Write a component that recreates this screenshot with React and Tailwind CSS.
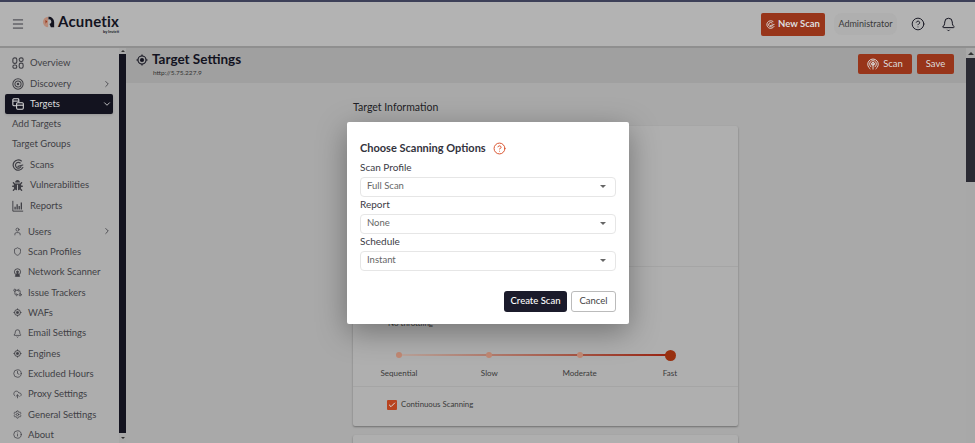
import { User, Shield, GitCompareArrows, Bell, Clock, CloudUpload, Settings, Info, ChevronRight, ChevronDown, Menu, CircleHelp, Check } from "lucide-react";
import { FaBug } from "react-icons/fa";

const font = { fontFamily: 'Lato, "Noto Sans", sans-serif' };

function OverviewIcon({ className }) {
  return (
    <svg viewBox="0 0 14 14" className={className} fill="none" stroke="currentColor" strokeWidth="1.3">
      <rect x="1" y="1" width="4.6" height="6.4" rx="2" />
      <rect x="8.4" y="1" width="4.6" height="4.2" rx="2" />
      <rect x="1" y="9.4" width="4.6" height="3.8" rx="1.9" />
      <rect x="8.4" y="7.2" width="4.6" height="6" rx="2" />
    </svg>
  );
}

function DiscoveryIcon({ className }) {
  return (
    <svg viewBox="0 0 14 14" className={className} fill="none" stroke="currentColor">
      <circle cx="7" cy="7" r="6" strokeWidth="1.2" />
      <circle cx="7" cy="7" r="3.6" strokeWidth="1.2" />
      <circle cx="7" cy="7" r="1.5" fill="currentColor" stroke="none" />
    </svg>
  );
}

function TargetsIcon({ className }) {
  return (
    <svg viewBox="0 0 14 14" className={className} fill="none" stroke="currentColor" strokeWidth="1.2">
      <path d="M5 9H2a1 1 0 0 1-1-1V2a1 1 0 0 1 1-1h5a1 1 0 0 1 1 1v3" />
      <path d="M1 3.6h7" />
      <rect x="5.4" y="5.6" width="7.8" height="7.4" rx="1.2" />
      <path d="M5.4 8.4h7.8" />
    </svg>
  );
}

function ScansIcon({ className }) {
  return (
    <svg viewBox="0 0 14 14" className={className} fill="none" stroke="currentColor" strokeWidth="1.4" strokeLinecap="round">
      <path d="M11 2.3A6 6 0 1 0 12.6 10" />
      <path d="M9.6 4.6A3.4 3.4 0 1 0 10.4 9" />
      <path d="M7 8.6 12.6 7" />
    </svg>
  );
}

function ReportsIcon({ className }) {
  return (
    <svg viewBox="0 0 14 14" className={className} fill="none" stroke="currentColor">
      <path d="M1 1v12h12" strokeWidth="1.1" />
      <path d="M3.6 11V8M6 11V5M8.4 11V7M10.9 11V3" strokeWidth="1.5" />
    </svg>
  );
}

function NetworkIcon({ className }) {
  return (
    <svg viewBox="0 0 14 14" className={className} fill="none" stroke="currentColor" strokeWidth="1.4">
      <circle cx="7" cy="6" r="4.8" />
      <circle cx="7" cy="6" r="1.5" fill="currentColor" />
      <path d="M7 7 3.6 13h6.8Z" fill="currentColor" />
    </svg>
  );
}

function WafIcon({ className }) {
  return (
    <svg viewBox="0 0 14 14" className={className} fill="none" stroke="currentColor" strokeWidth="1.4">
      <circle cx="7" cy="7" r="4.6" />
      <circle cx="7" cy="7" r="1.7" fill="currentColor" />
      <path d="M7 .8v2M7 11.2v2M.8 7h2M11.2 7h2" />
    </svg>
  );
}

function LocateIcon({ className }) {
  return (
    <svg viewBox="0 0 14 14" className={className} fill="none" stroke="currentColor" strokeWidth="1.3">
      <circle cx="7" cy="7" r="4.7" />
      <circle cx="7" cy="7" r="2.4" fill="currentColor" stroke="none" />
      <path d="M7 .5v1.8M7 11.7v1.8M.5 7h1.8M11.7 7h1.8" />
    </svg>
  );
}

function RadarIcon({ className }) {
  return (
    <svg viewBox="0 0 14 14" className={className} fill="none" stroke="currentColor" strokeWidth="1.1" strokeLinecap="round">
      <path d="M3.6 12.6a6.2 6.2 0 1 1 6.8 0" />
      <path d="M4.7 10.4a4 4 0 1 1 4.6 0" />
      <path d="M5.9 8.6a1.9 1.9 0 1 1 2.2 0" />
      <circle cx="7" cy="7.2" r=".7" fill="currentColor" />
      <path d="M7 8v5" />
    </svg>
  );
}

function LogoMark({ className }) {
  return (
    <svg viewBox="0 0 14 14" className={className}>
      <path d="M6 1a6 6 0 0 0 0 12Z" fill="#b88a78" />
      <path d="M6.4 1A6 6 0 0 1 13 7v6H9.2L7.6 9.4a2.4 2.4 0 1 0-1.2-5.4Z" fill="#13131f" />
      <path d="M2.8 4.6 5 6.2 3 9Z" fill="#98351a" />
    </svg>
  );
}

function MainItem({ icon: Icon, label, chevron, active, size = "w-[12px] h-[12px]" }) {
  return (
    <div className={`flex items-center h-[20.35px] ${active ? "pl-[7px] pr-[1px] bg-[#13131f] text-[#dddddd] rounded-[2px] shadow-sm" : "pl-[12px] pr-[7px] text-[#3f3f45]"}`}>
      <div className="w-[18px] shrink-0 flex items-center">
        <Icon className={size} />
      </div>
      <span className="text-[9.5px] leading-none">{label}</span>
      {chevron === "right" && <ChevronRight className="ml-auto w-[10px] h-[10px]" strokeWidth={2} />}
      {chevron === "down" && <ChevronDown className="ml-auto w-[10px] h-[10px]" strokeWidth={2} />}
    </div>
  );
}

function SubItem({ icon: Icon, label, chevron }) {
  return (
    <div className="flex items-center h-[20.35px] pl-[13px] pr-[7px] text-[#3f3f45]">
      <div className="w-[15px] shrink-0 flex items-center">
        <Icon className="w-[9px] h-[9px]" strokeWidth={2} />
      </div>
      <span className="text-[9.5px] leading-none">{label}</span>
      {chevron && <ChevronRight className="ml-auto w-[10px] h-[10px]" strokeWidth={2} />}
    </div>
  );
}

function SelectRow({ label, value }) {
  return (
    <div>
      <div className="text-[10px] leading-[15px] h-[17px] text-[#3c3c46]">{label}</div>
      <div className="h-[19.5px] mb-[0.5px] border border-[#e6e6e6] rounded-[4px] flex items-center pl-[6px] pr-[9px] text-[9.5px] text-[#666]">
        <span className="-mt-[1px]">{value}</span>
        <span className="ml-auto w-0 h-0 border-l-[3px] border-r-[3px] border-t-[3px] border-l-transparent border-r-transparent border-t-[#666]" />
      </div>
    </div>
  );
}

export default function App() {
  return (
    <div style={font} className="relative w-[975px] h-[443px] overflow-hidden flex flex-col bg-[#a9a9a9]">
      {/* Top bar */}
      <div className="h-[48px] shrink-0 border-t-2 border-t-[#3d4058] border-b-2 border-b-[#8f8f8f] bg-[#b3b3b3] flex items-center">
        <Menu className="ml-[11px] w-[14px] h-[14px] text-[#33333a]" strokeWidth={1.6} />
        <div className="ml-[18px] flex flex-col items-end">
          <div className="flex items-center h-[15px]">
            <LogoMark className="w-[12px] h-[12px] mr-[3px]" />
            <span className="text-[15px] font-bold leading-none tracking-[0.2px] text-[#13131f]">Acunetix</span>
          </div>
          <span className="text-[4px] leading-[5px] font-bold text-[#13131f]">by Invicti</span>
        </div>
        <div className="ml-auto flex items-center">
          <div className="w-[64px] h-[23px] bg-[#98351a] rounded-[2px] flex items-center justify-center gap-[3px] text-[#dddddd]">
            <ScansIcon className="w-[9px] h-[9px]" />
            <span className="text-[9.5px] font-bold">New Scan</span>
          </div>
          <div className="ml-[9px] w-[63px] h-[22px] rounded-[8px] bg-[#afafaf] flex items-center justify-center text-[9px] text-[#3a3a3a]">Administrator</div>
          <CircleHelp className="ml-[14px] w-[14px] h-[14px] text-[#13131f]" strokeWidth={1.6} />
          <Bell className="ml-[16px] mr-[19px] w-[15px] h-[15px] text-[#13131f]" strokeWidth={1.6} />
        </div>
      </div>

      <div className="flex-1 flex min-h-0">
        {/* Sidebar */}
        <div className="w-[119px] shrink-0 pt-[5px] bg-[#adadad]">
          <MainItem icon={OverviewIcon} label="Overview" />
          <MainItem icon={DiscoveryIcon} label="Discovery" chevron="right" />
          <div className="ml-[5px] mr-[6px]">
            <MainItem icon={TargetsIcon} label="Targets" chevron="down" active />
            <div className="flex items-center h-[20.35px] pl-[7px] text-[9.5px] text-[#3f3f45]">Add Targets</div>
            <div className="flex items-center h-[20.35px] pl-[7px] text-[9.5px] text-[#3f3f45]">Target Groups</div>
          </div>
          <MainItem icon={ScansIcon} label="Scans" />
          <MainItem icon={FaBug} label="Vulnerabilities" size="w-[11px] h-[11px]" />
          <MainItem icon={ReportsIcon} label="Reports" />
          <div className="h-[5.5px]" />
          <SubItem icon={User} label="Users" chevron />
          <SubItem icon={Shield} label="Scan Profiles" />
          <SubItem icon={NetworkIcon} label="Network Scanner" />
          <SubItem icon={GitCompareArrows} label="Issue Trackers" />
          <SubItem icon={WafIcon} label="WAFs" />
          <SubItem icon={Bell} label="Email Settings" />
          <SubItem icon={WafIcon} label="Engines" />
          <SubItem icon={Clock} label="Excluded Hours" />
          <SubItem icon={CloudUpload} label="Proxy Settings" />
          <SubItem icon={Settings} label="General Settings" />
          <SubItem icon={Info} label="About" />
        </div>

        {/* Sidebar scrollbar */}
        <div className="w-[7px] shrink-0 bg-[#a8a8a8] flex flex-col">
          <div className="h-[6px] flex items-center justify-center">
            <span className="w-0 h-0 border-l-[2px] border-r-[2px] border-b-[2px] border-l-transparent border-r-transparent border-b-[#333]" />
          </div>
          <div className="flex-1 bg-[#13131f]" />
          <div className="h-[10px] flex items-center justify-center">
            <span className="w-0 h-0 border-l-[2px] border-r-[2px] border-t-[2px] border-l-transparent border-r-transparent border-t-[#333]" />
          </div>
        </div>

        {/* Main */}
        <div className="flex-1 min-w-0 flex flex-col bg-[#a9a9a9]">
          <div className="h-[35px] shrink-0 bg-[#a0a0a0] pl-[10px] pr-[12px] flex items-center justify-between">
            <div className="-mt-[3px]">
              <div className="flex items-center gap-[4px] h-[17px]">
                <LocateIcon className="w-[12px] h-[12px] text-[#13131f]" />
                <span className="text-[13.5px] font-bold text-[#13131f] leading-none">Target Settings</span>
              </div>
              <div className="pl-[17px] text-[6.5px] leading-[8px] text-[#333]">http://5.75.227.9</div>
            </div>
            <div className="flex items-center gap-[5px] -mt-[3px]">
              <div className="w-[54px] h-[20px] bg-[#98351a] rounded-[2px] flex items-center justify-center gap-[4px] text-[#dddddd]">
                <RadarIcon className="w-[12px] h-[12px]" />
                <span className="text-[9.5px]">Scan</span>
              </div>
              <div className="w-[37px] h-[20px] bg-[#98351a] rounded-[2px] flex items-center justify-center text-[#dddddd] text-[9.5px]">Save</div>
            </div>
          </div>

          <div className="flex-1 min-h-0 flex flex-col pl-[227px] pt-[18px] overflow-hidden">
            <div className="shrink-0 text-[10.5px] leading-[13px] text-[#1f1f26] h-[25px]">Target Information</div>
            <div className="w-[385px] shrink-0 bg-[#afafaf] rounded-[2px] shadow-[0_1px_2px_rgba(0,0,0,0.35)] flex flex-col h-[300px]">
              <div className="h-[141px] shrink-0 border-b border-[#a5a5a5]" />
              <div className="pt-[50px] pl-[35px] text-[8px] leading-[12px] text-[#3a3a3a]">No throttling</div>
              <div className="mt-[20px] relative h-[12px] flex items-center">
                <div className="ml-[46px] mr-[68px] flex-1 h-[2px] bg-gradient-to-r from-[#b9a49b] to-[#97210f]" />
                <div className="absolute inset-0 pl-[40px] pr-[62px] flex items-center justify-between">
                  <span className="w-[11px] flex justify-center"><span className="w-[6px] h-[6px] rounded-full bg-[#c08873]" /></span>
                  <span className="w-[11px] flex justify-center"><span className="w-[6px] h-[6px] rounded-full bg-[#c08873]" /></span>
                  <span className="w-[11px] flex justify-center"><span className="w-[6px] h-[6px] rounded-full bg-[#c08873]" /></span>
                  <span className="w-[11px] h-[11px] rounded-full bg-[#98300f]" />
                </div>
              </div>
              <div className="mt-[6px] pl-[21px] pr-[43px] flex justify-between text-[8px] leading-[12px] text-[#3a3a3a]">
                <span className="w-[50px] text-center">Sequential</span>
                <span className="w-[50px] text-center">Slow</span>
                <span className="w-[50px] text-center">Moderate</span>
                <span className="w-[50px] text-center">Fast</span>
              </div>
              <div className="mt-[7px] border-t border-[#a5a5a5] pt-[12px] pl-[34px] flex items-center gap-[4px]">
                <span className="w-[10px] h-[10px] rounded-[1px] bg-[#b8431f] flex items-center justify-center text-[#dddddd]">
                  <Check className="w-[8px] h-[8px]" strokeWidth={3} />
                </span>
                <span className="text-[7.8px] text-[#3a3a3a]">Continuous Scanning</span>
              </div>
            </div>
            <div className="mt-[9px] w-[385px] h-[40px] shrink-0 bg-[#afafaf] rounded-[2px] shadow-[0_1px_2px_rgba(0,0,0,0.35)]" />
          </div>
        </div>

        {/* Page scrollbar */}
        <div className="w-[9px] shrink-0 bg-[#a8a8a8] flex flex-col">
          <div className="h-[10px] flex items-center justify-center">
            <span className="w-0 h-0 border-l-[3px] border-r-[3px] border-b-[3px] border-l-transparent border-r-transparent border-b-[#333]" />
          </div>
          <div className="h-[124px] bg-[#2a2a33]" />
        </div>
      </div>

      {/* Modal */}
      <div className="absolute left-[347px] top-[122px] w-[282px] h-[202px] bg-white rounded-[2px] shadow-[0_8px_30px_rgba(0,0,0,0.35)] px-[13px] pt-[18px]">
        <div className="flex items-center h-[16px] mb-[4px]">
          <span className="text-[11px] font-bold text-[#33333d]">Choose Scanning Options</span>
          <CircleHelp className="ml-[7px] w-[13px] h-[13px] text-[#d9502a]" strokeWidth={1.8} />
        </div>
        <SelectRow label="Scan Profile" value="Full Scan" />
        <SelectRow label="Report" value="None" />
        <SelectRow label="Schedule" value="Instant" />
        <div className="mt-[20px] flex justify-end gap-[4px]">
          <div className="w-[63px] h-[21px] bg-[#1b1b2b] rounded-[3px] flex items-center justify-center text-white text-[9.5px] font-medium">Create Scan</div>
          <div className="w-[45px] h-[21px] bg-white border border-[#bbb] rounded-[3px] flex items-center justify-center text-[#444] text-[9.5px]">Cancel</div>
        </div>
      </div>
    </div>
  );
}
